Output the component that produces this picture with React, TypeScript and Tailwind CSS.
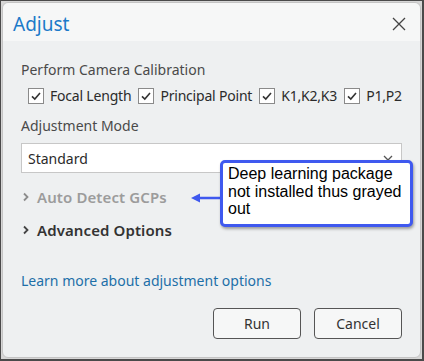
import React from 'react';

const ui = { fontFamily: '"Noto Sans", "Open Sans", sans-serif' };

function Check({ label }: { label: string }) {
  return (
    <label className="flex flex-none items-center gap-[6px] whitespace-nowrap">
      <span className="flex h-[16px] w-[16px] items-center justify-center border border-[#8a8a8a] bg-white">
        <svg width="12" height="12" viewBox="0 0 12 12">
          <path d="M2 6.3 L4.8 9 L10 3" fill="none" stroke="#333" strokeWidth="1.6" />
        </svg>
      </span>
      <span className="text-[14px] leading-[20px] tracking-[-0.2px] text-[#2b2b2b]">{label}</span>
    </label>
  );
}

function Chevron({ color }: { color: string }) {
  return (
    <svg width="8" height="10" viewBox="0 0 8 10">
      <path d="M2 1.5 L5.5 5 L2 8.5" fill="none" stroke={color} strokeWidth="1.8" />
    </svg>
  );
}

export default function App() {
  return (
    <div className="h-[361px] w-[424px] overflow-hidden border-t border-l border-r-2 border-b-2 border-[#4a4a4a] bg-[#d6d6d6] p-[1px]" style={ui}>
      <div className="relative flex h-full flex-col rounded-[6px] border border-[#c4c4c4] bg-[#eef0f1]">
        <div className="flex h-[38px] flex-none items-center justify-between rounded-t-[6px] bg-[#f6f7f7] pl-[10px] pr-[14px]">
          <span className="pt-[3px] text-[19px] leading-[24px] text-[#1b7ac9]">Adjust</span>
          <svg width="14" height="14" viewBox="0 0 14 14" className="mt-[3px]">
            <path d="M1 1 L13 13 M13 1 L1 13" stroke="#444" strokeWidth="1.3" />
          </svg>
        </div>

        <div className="flex flex-col px-[18px] pt-[19px]">
          <div className="text-[14px] leading-[20px] text-[#4a4a4a]">Perform Camera Calibration</div>
          <div className="mt-[6px] flex gap-[7px] pl-[7px]">
            <Check label="Focal Length" />
            <Check label="Principal Point" />
            <Check label="K1,K2,K3" />
            <Check label="P1,P2" />
          </div>

          <div className="mt-[10px] text-[14px] leading-[20px] text-[#4a4a4a]">Adjustment Mode</div>
          <div className="mt-[7px] flex h-[30px] items-center justify-between border border-[#c7c7c7] bg-white pl-[6px] pr-[8px]">
            <span className="text-[14px] text-[#2b2b2b]">Standard</span>
            <svg width="10" height="6" viewBox="0 0 10 6">
              <path d="M1 1 L5 5 L9 1" fill="none" stroke="#555" strokeWidth="1.3" />
            </svg>
          </div>

          <div className="mt-[14px] flex items-center gap-[7px] pl-[1px]">
            <Chevron color="#8c8c8c" />
            <span className="text-[15px] leading-[20px] font-semibold tracking-[0.1px] text-[#9c9c9c]">Auto Detect GCPs</span>
          </div>
          <div className="mt-[13px] flex items-center gap-[7px] pl-[1px]">
            <Chevron color="#444" />
            <span className="text-[15px] leading-[20px] font-semibold tracking-[0.1px] text-[#333]">Advanced Options</span>
          </div>

          <div className="mt-[31px] text-[14px] leading-[20px] text-[#1d6fa8]">Learn more about adjustment options</div>

          <div className="mt-[17px] flex justify-end gap-[13px]">
            <button className="h-[31px] w-[88px] rounded-[4px] border border-[#555] bg-[#f6f7f7] text-[14px] text-[#333]">Run</button>
            <button className="h-[31px] w-[88px] rounded-[4px] border border-[#555] bg-[#f6f7f7] text-[14px] text-[#333]">Cancel</button>
          </div>
        </div>

        <div className="absolute left-[188px] top-[189px] flex items-center">
          <svg width="32" height="12" viewBox="0 0 32 12">
            <path d="M0 6 L9 1.5 L9 10.5 Z" fill="#3f59ef" />
            <path d="M8 6 L32 6" stroke="#3f59ef" strokeWidth="2.5" />
          </svg>
        </div>
        <div
          className="absolute left-[217px] top-[157px] w-[193px] rounded-[5px] border-[3px] border-[#3f59ef] bg-white px-[5px] pb-[6px] pt-[2px] text-[16px] leading-[17.5px] text-black shadow-[1px_2px_3px_rgba(0,0,0,0.35)]"
          style={{ fontFamily: '"Liberation Sans", Arial, sans-serif' }}
        >
          Deep learning package not installed thus grayed out
        </div>
      </div>
    </div>
  );
}
